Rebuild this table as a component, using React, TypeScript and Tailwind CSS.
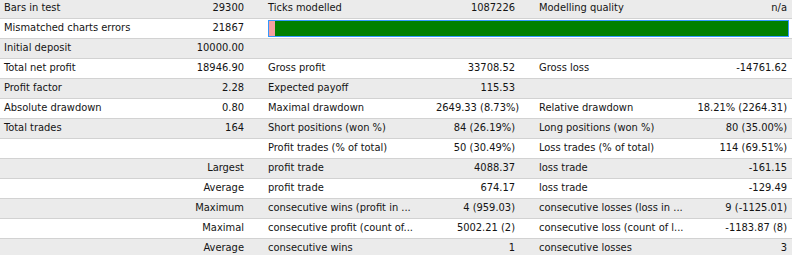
type Row = {
  cells?: [string, string, string, string, string, string];
  bar?: boolean;
  first?: [string, string];
};

const rows: Row[] = [
  { cells: ["Bars in test", "29300", "Ticks modelled", "1087226", "Modelling quality", "n/a"] },
  { bar: true, first: ["Mismatched charts errors", "21867"] },
  { cells: ["Initial deposit", "10000.00", "", "", "", ""] },
  { cells: ["Total net profit", "18946.90", "Gross profit", "33708.52", "Gross loss", "-14761.62"] },
  { cells: ["Profit factor", "2.28", "Expected payoff", "115.53", "", ""] },
  { cells: ["Absolute drawdown", "0.80", "Maximal drawdown", "2649.33 (8.73%)", "Relative drawdown", "18.21% (2264.31)"] },
  { cells: ["Total trades", "164", "Short positions (won %)", "84 (26.19%)", "Long positions (won %)", "80 (35.00%)"] },
  { cells: ["", "", "Profit trades (% of total)", "50 (30.49%)", "Loss trades (% of total)", "114 (69.51%)"] },
  { cells: ["", "Largest", "profit trade", "4088.37", "loss trade", "-161.15"] },
  { cells: ["", "Average", "profit trade", "674.17", "loss trade", "-129.49"] },
  { cells: ["", "Maximum", "consecutive wins (profit in ...", "4 (959.03)", "consecutive losses (loss in ...", "9 (-1125.01)"] },
  { cells: ["", "Maximal", "consecutive profit (count of...", "5002.21 (2)", "consecutive loss (count of l...", "-1183.87 (8)"] },
  { cells: ["", "Average", "consecutive wins", "1", "consecutive losses", "3"] },
];

export default function App() {
  return (
    <div
      className="w-[792px] h-[255px] overflow-hidden bg-white text-[11px] text-[#141414] font-stretch-condensed"
      style={{ fontFamily: '"DejaVu Sans Condensed", "DejaVu Sans", sans-serif' }}
    >
      <div className="-mt-px">
        {rows.map((row, i) => (
          <div
            key={i}
            className={`grid grid-cols-[160px_88px_188px_83px_176px_97px] h-5 items-center border-b border-[#d2d2d2] whitespace-nowrap ${
              i % 2 === 0 ? "bg-[#ebebeb]" : "bg-white"
            }`}
          >
            {row.bar && row.first ? (
              <>
                <div className="pl-1">{row.first[0]}</div>
                <div className="pr-1 text-right">{row.first[1]}</div>
                <div className="col-span-4 ml-5 mr-[3px] h-[17px] flex border border-[#3399ff]">
                  <div className="w-[6px] bg-[#f4a0a0]" />
                  <div className="flex-1 bg-[#008000]" />
                </div>
              </>
            ) : (
              row.cells && (
                <>
                  <div className="pl-1">{row.cells[0]}</div>
                  <div className="pr-1 text-right">{row.cells[1]}</div>
                  <div className="pl-5">{row.cells[2]}</div>
                  <div className="pr-1 text-right">{row.cells[3]}</div>
                  <div className="pl-5">{row.cells[4]}</div>
                  <div className="pr-[5px] text-right">{row.cells[5]}</div>
                </>
              )
            )}
          </div>
        ))}
      </div>
    </div>
  );
}
